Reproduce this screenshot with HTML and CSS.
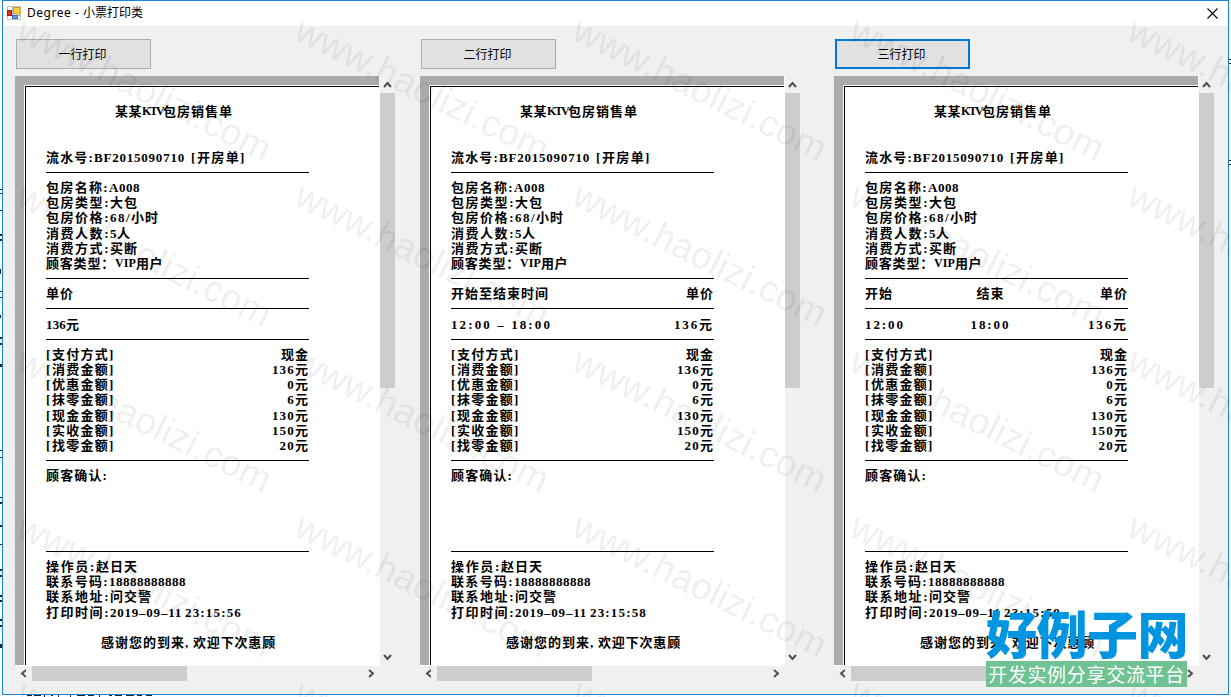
FILE: index.html
```html
<!DOCTYPE html>
<html lang="zh-CN">
<head>
<meta charset="utf-8">
<title>Degree - 小票打印类</title>
<link rel="stylesheet" href="styles.css">
</head>
<body>
<div class="window">
  <header class="titlebar">
    <svg class="app-icon" width="14" height="14" viewBox="0 0 14 14">
      <rect x="0.5" y="0.5" width="13" height="13" fill="#fff" stroke="#c4c4c4"/>
      <path d="M5.5 0V14M0 9.5H14" stroke="#b9b9b9"/>
      <rect x="0.5" y="4.5" width="4" height="5" fill="#d8362a" stroke="#a01810"/>
      <rect x="6.5" y="1.5" width="6.500" height="6.500" fill="#fbd044" stroke="#d09a10"/>
      <rect x="5.500" y="9.500" width="5" height="3" fill="#6a9cf5" stroke="#3b6cd0"/>
    </svg>
    <div class="caption"><span data-w="56">Degree - </span><span data-w="60">小票打印类</span></div>
    <svg class="close" width="11" height="11" viewBox="0 0 11 11"><path d="M.5 .5L10.500 10.500M10.500 .5L.5 10.500" stroke="#000" stroke-width="1.100"/></svg>
  </header>
  <main class="columns" id="columns"></main>
</div>
<div class="fragments" id="fragments"></div>
<svg class="watermark" id="watermark" width="1231" height="697"></svg>
<div class="brand">
  <div class="brand-name"><span data-w="202">好例子网</span></div>
  <div class="brand-tag"><span data-w="197">开发实例分享交流平台</span></div>
</div>
<script src="app.js"></script>
</body>
</html>
```

FILE: styles.css
```css
* { box-sizing: border-box; }
body {
  margin: 0;
  width: 1231px;
  height: 697px;
  overflow: hidden;
  position: relative;
  background: #fff;
  color: #000;
  font-family: "Noto Sans CJK SC", sans-serif;
}
.window {
  width: 1227px;
  height: 695px;
  margin-left: 2px;
  border: 1px solid #1883d7;
  background: #f0f0f0;
}
.titlebar {
  height: 25px;
  padding: 0 10px 1px 4px;
  background: #fff;
  display: flex;
  align-items: center;
}
.caption {
  display: flex;
  flex: 1;
  margin-left: 6px;
  font: 12px/24px "Noto Sans", "Noto Sans CJK SC", sans-serif;
  white-space: pre;
}
.close { display: block; }
.columns {
  display: grid;
  grid-template-columns: 405px 414px 380px;
  padding: 13px 0 0 12px;
}
.column { width: 380px; }
.btn {
  display: block;
  width: 135px;
  height: 30px;
  margin: 0 0 7px 1px;
  padding: 0 2px 0 0;
  border: 1px solid #adadad;
  background: #e1e1e1;
  color: #000;
  font: 12px/26px "Noto Sans CJK SC", sans-serif;
}
.btn.focused { border: 2px solid #0078d7; }
.preview {
  display: grid;
  grid-template-columns: 365px 15px;
  grid-template-rows: 590px 15px;
}
.canvas {
  background: #ababab;
  border-right: 1px solid #fff;
  border-bottom: 1px solid #fff;
  padding: 9px 0 0 9px;
  overflow: hidden;
}
.paper-edge {
  height: 100%;
  background: #fff;
  padding: 1px 0 0 1px;
}
.paper {
  height: 100%;
  border-left: 1px solid #000;
  border-top: 1px solid #000;
  padding: 17.300px 0 0 20px;
}
.row {
  width: 263px;
  height: 15.165px;
  display: flex;
  align-items: center;
  font: bold 13px/15px "Liberation Serif", "Noto Sans CJK SC", serif;
  white-space: pre;
}
.row.split { justify-content: space-between; }
.row.split .middle { margin-right: 12px; }
.row.title { padding-left: 69px; }
.row.thanks { padding-left: 55px; }
.cell { display: flex; }
.narrow { font-size: 12px; }
.rule { width: 263px; height: 1px; background: #000; }
.vbar, .hbar {
  display: flex;
  align-items: center;
  justify-content: space-between;
}
.vbar { flex-direction: column; padding: 5px 0 5px; }
.vbar .thumb { width: 15px; height: 295px; margin: 5px 0 auto; background: #cdcdcd; }
.hbar { padding: 0 6px 0 5px; }
.hbar .thumb { width: 155px; height: 15px; margin: 0 auto 0 6px; background: #cdcdcd; }
.arrow { display: block; fill: none; stroke: #505050; stroke-width: 2; }
.watermark { position: absolute; inset: 0; }
.watermark text {
  font-family: "Liberation Sans", sans-serif;
  font-size: 37px;
  fill: #000;
  fill-opacity: 0.075;
}
.fragments { position: absolute; inset: 0; }
.fragment { position: absolute; background: #222; }
.brand {
  position: absolute;
  left: 986px;
  top: 608px;
  width: 201px;
  white-space: nowrap;
}
.brand-name {
  height: 53px;
  font: 900 51px/48px "Noto Sans CJK SC", sans-serif;
  color: #0095e0;
}
.brand-tag {
  height: 26px;
  padding-left: 2px;
  background: #6fc291;
  color: #fff;
  font: 19px/25px "Noto Sans CJK SC", sans-serif;
}
```

FILE: app.js
```js
// Each text run is [text, width, class]; runs are tracked out to their printed width.
const run = ([text, width, cls = '']) => `<span class="${cls}" data-w="${width}">${text}</span>`;
const cell = (runs, i, all) =>
  `<div class="cell ${all && all.length === 3 && i === 1 ? 'middle' : ''}">${runs.map(run).join('')}</div>`;
const row = (...cells) => `<div class="row split">${cells.map(cell).join('')}</div>`;
const line = '<div class="row"><div class="rule"></div></div>';
const blank = '<div class="row"></div>';

const receipts = [
  {
    button: '一行打印', seconds: '56',
    head: row([['单价', 28]]),
    body: row([['136', 20], ['元', 14]])
  },
  {
    button: '二行打印', seconds: '58',
    head: row([['开始至结束时间', 98]], [['单价', 28]]),
    body: row([['12:00 – 18:00', 101]], [['136', 25], ['元', 15]])
  },
  {
    button: '三行打印', seconds: '59', focused: true,
    head: row([['开始', 28]], [['结束', 28]], [['单价', 28]]),
    body: row([['12:00', 40]], [['18:00', 40]], [['136', 25], ['元', 15]])
  }
];
const amounts = [['消费金额', '136'], ['优惠金额', '0'], ['抹零金额', '6'], ['现金金额', '130'], ['实收金额', '150'], ['找零金额', '20']];

const arrow = (points, w, h) =>
  `<svg class="arrow" width="${w}" height="${h}" viewBox="0 0 ${w} ${h}"><polyline points="${points}"/></svg>`;

const paper = r => [
  `<div class="row title">${cell([['某某', 27], ['KTV', 21, 'narrow'], ['包房销售单', 70]])}</div>`,
  blank, blank,
  row([['流水号:', 48], ['BF2015090710', 91], [' ', 6], ['[', 6], ['开房单', 43], [']', 6]]),
  line,
  row([['包房名称:', 63], ['A008', 31]]),
  row([['包房类型:', 64], ['大包', 28]]),
  row([['包房价格:', 64], ['68/', 21], ['小时', 28]]),
  row([['消费人数:', 64], ['5', 7], ['人', 14]]),
  row([['消费方式:', 64], ['买断', 28]]),
  row([['顾客类型：', 69], ['VIP', 21, 'narrow'], ['用户', 27]]),
  line, r.head, line, r.body, line,
  row([['[', 6], ['支付方式', 57], [']', 6]], [['现金', 28]]),
  ...amounts.map(([k, v]) => row([['[', 6], [k, 57], [']', 6]], [[v, v.length * 7.7], ['元', 14]])),
  line,
  row([['顾客确认:', 62]]),
  blank, blank, blank, blank,
  line,
  row([['操作员:', 50], ['赵日天', 42]]),
  row([['联系号码:', 63], ['18888888888', 77]]),
  row([['联系地址:', 64], ['问交警', 42]]),
  row([['打印时间:', 64], ['2019–09–11', 72], [' ', 3], ['23:15:' + r.seconds, 57]]),
  blank,
  `<div class="row thanks">${cell([['感谢您的到来', 84], [',', 8], ['欢迎下次惠顾', 83]])}</div>`
].join('');

document.getElementById('columns').innerHTML = receipts.map(r => `
  <section class="column">
    <button class="btn ${r.focused ? 'focused' : ''}">${r.button}</button>
    <div class="preview">
      <div class="canvas"><div class="paper-edge"><div class="paper">${paper(r)}</div></div></div>
      <div class="vbar">${arrow('1,6 4.5,2 8,6', 9, 7)}<div class="thumb"></div>${arrow('1,1 4.5,5 8,1', 9, 7)}</div>
      <div class="hbar">${arrow('6,1 2,4.5 6,8', 6, 9)}<div class="thumb"></div>${arrow('1,1 5,4.5 1,8', 6, 9)}</div>
    </div>
  </section>`).join('');

document.querySelectorAll('[data-w]').forEach(el => {
  const gap = (+el.dataset.w - el.getBoundingClientRect().width) / el.textContent.length;
  el.style.letterSpacing = gap + 'px';
});

let marks = '';
for (let y = 0; y < 5; y++)
  for (let x = 0; x < 5; x++)
    marks += `<text textLength="278" transform="translate(${14.5 + x * 277.7} ${38.5 + y * 165.5}) rotate(26.4)">www.haolizi.com</text>`;
document.getElementById('watermark').innerHTML = marks;

// Slivers of the window behind: [x, y, width, height]
document.getElementById('fragments').innerHTML = [
  [0, 189, 2, 1], [0, 193, 2, 1], [0, 210, 2, 1], [0, 234, 2, 2], [0, 239, 2, 2], [0, 269, 1, 5],
  [0, 291, 2, 1], [0, 297, 2, 1], [0, 315, 1, 3], [0, 337, 2, 2], [0, 343, 2, 2], [0, 364, 2, 3],
  [0, 450, 2, 1], [0, 457, 2, 1], [0, 497, 2, 1], [0, 502, 2, 2], [0, 525, 2, 2], [0, 544, 2, 1],
  [0, 569, 2, 2], [0, 575, 2, 2], [0, 595, 2, 2], [0, 600, 2, 2], [0, 619, 2, 2], [0, 625, 2, 2], [0, 644, 2, 4],
  [27, 695, 5, 1], [34, 695, 7, 1], [44, 695, 1, 2], [51, 695, 2, 1], [58, 695, 1, 2], [70, 695, 1, 2],
  [77, 695, 8, 1], [88, 695, 6, 1], [99, 695, 1, 2], [109, 695, 3, 1], [115, 695, 7, 1], [126, 695, 8, 1], [137, 695, 5, 1], [146, 695, 6, 1],
  [1229, 59, 2, 1], [1229, 63, 2, 1], [1229, 160, 2, 1], [1229, 164, 2, 1]
].map(([x, y, w, h]) => `<i class="fragment" style="left:${x}px;top:${y}px;width:${w}px;height:${h}px"></i>`).join('');
```
